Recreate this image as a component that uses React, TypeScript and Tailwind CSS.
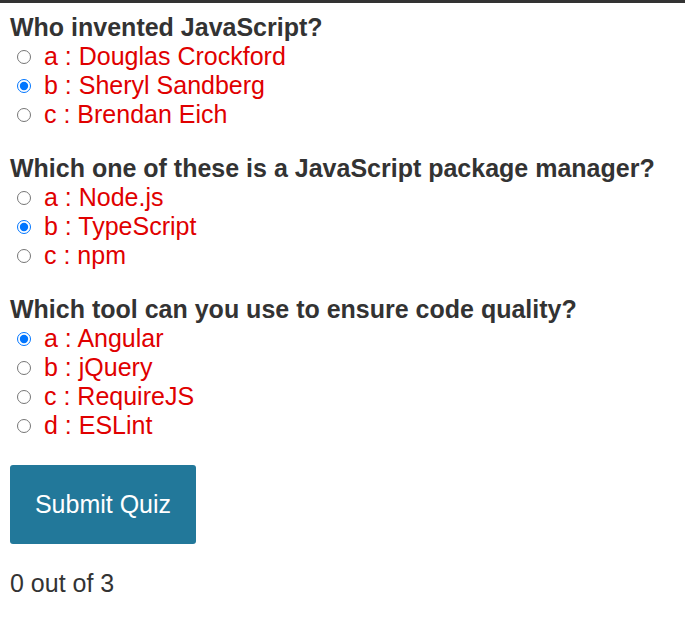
const questions = [
  {
    question: "Who invented JavaScript?",
    answers: { a: "Douglas Crockford", b: "Sheryl Sandberg", c: "Brendan Eich" },
    picked: "b",
  },
  {
    question: "Which one of these is a JavaScript package manager?",
    answers: { a: "Node.js", b: "TypeScript", c: "npm" },
    picked: "b",
  },
  {
    question: "Which tool can you use to ensure code quality?",
    answers: { a: "Angular", b: "jQuery", c: "RequireJS", d: "ESLint" },
    picked: "a",
  },
];

export default function App() {
  return (
    <div className="min-h-screen bg-white border-t-[3px] border-[#333] px-[10px] pt-[10px] font-['Liberation_Sans',Arial,sans-serif] text-[25px] text-[#333]">
      {questions.map((q, i) => (
        <div key={i} className="mb-[25px]">
          <div className="font-bold leading-[29px]">{q.question}</div>
          <div>
            {Object.entries(q.answers).map(([letter, text]) => (
              <label key={letter} className="flex items-center leading-[29px] text-[#e00000]">
                <input
                  type="radio"
                  name={"question" + i}
                  value={letter}
                  defaultChecked={q.picked === letter}
                  className="ml-[7px] mr-[13px] my-0 w-[14px] h-[14px]"
                />
                {letter} : {text}
              </label>
            ))}
          </div>
        </div>
      ))}
      <button className="bg-[#22789a] text-white rounded-[3px] w-[186px] h-[79px] text-[25px]">
        Submit Quiz
      </button>
      <div className="mt-[25px] leading-[29px]">0 out of 3</div>
    </div>
  );
}
